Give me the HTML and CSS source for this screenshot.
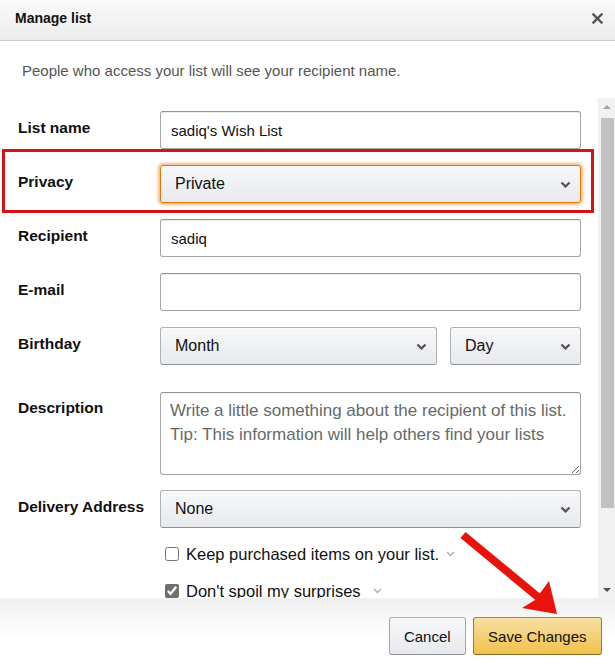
FILE: index.html
```html
<!DOCTYPE html>
<html lang="en">
<head>
    <meta charset="UTF-8">
    <meta name="viewport" content="width=device-width, initial-scale=1.0">
    <title>Manage list</title>
    <link rel="stylesheet" href="styles.css">
</head>
<body>
    <div class="popover">
        <div class="popover-header">
            <h4 class="popover-title">Manage list</h4>
            <button type="button" class="close-btn" aria-label="Close">
                <svg width="11" height="11" viewBox="0 0 11 11"><path d="M1.5 1.5l8 8M9.5 1.5l-8 8" stroke="#555" stroke-width="2.4" stroke-linecap="square"/></svg>
            </button>
        </div>

        <div class="popover-inner">
            <p class="intro">People who access your list will see your recipient name.</p>

            <div class="scroll-area">
                <form class="list-form" id="manageListForm">
                    <div class="form-row">
                        <label for="listName">List name</label>
                        <div class="field">
                            <input type="text" id="listName" class="text-input" value="sadiq's Wish List">
                        </div>
                    </div>
                    <div class="form-row">
                        <label>Privacy</label>
                        <div class="field">
                            <div class="dropdown focused">
                                <span>Private</span>
                                <svg class="chevron" width="11" height="7" viewBox="0 0 11 7"><path d="M1.5 1.5l4 4 4-4" fill="none" stroke="#555" stroke-width="2.3"/></svg>
                            </div>
                        </div>
                    </div>
                    <div class="form-row">
                        <label for="recipient">Recipient</label>
                        <div class="field">
                            <input type="text" id="recipient" class="text-input" value="sadiq">
                        </div>
                    </div>
                    <div class="form-row">
                        <label for="email">E-mail</label>
                        <div class="field">
                            <input type="email" id="email" class="text-input">
                        </div>
                    </div>
                    <div class="form-row birthday-row">
                        <label>Birthday</label>
                        <div class="field split">
                            <div class="dropdown month">
                                <span>Month</span>
                                <svg class="chevron" width="11" height="7" viewBox="0 0 11 7"><path d="M1.5 1.5l4 4 4-4" fill="none" stroke="#555" stroke-width="2.3"/></svg>
                            </div>
                            <div class="dropdown day">
                                <span>Day</span>
                                <svg class="chevron" width="11" height="7" viewBox="0 0 11 7"><path d="M1.5 1.5l4 4 4-4" fill="none" stroke="#555" stroke-width="2.3"/></svg>
                            </div>
                        </div>
                    </div>
                    <div class="form-row description-row">
                        <label for="description">Description</label>
                        <div class="field">
                            <textarea id="description" class="text-area" placeholder="Write a little something about the recipient of this list.&#10;Tip: This information will help others find your lists"></textarea>
                        </div>
                    </div>
                    <div class="form-row">
                        <label>Delivery Address</label>
                        <div class="field">
                            <div class="dropdown">
                                <span>None</span>
                                <svg class="chevron" width="11" height="7" viewBox="0 0 11 7"><path d="M1.5 1.5l4 4 4-4" fill="none" stroke="#555" stroke-width="2.3"/></svg>
                            </div>
                        </div>
                    </div>
                    <div class="check-row">
                        <input type="checkbox" id="keepPurchased">
                        <label for="keepPurchased">Keep purchased items on your list.</label>
                        <svg class="mini-chevron" width="9" height="6" viewBox="0 0 9 6"><path d="M1 1l3.5 3.5L8 1" fill="none" stroke="#aaa" stroke-width="1.3"/></svg>
                    </div>
                    <div class="check-row">
                        <input type="checkbox" id="noSpoil" checked>
                        <label for="noSpoil">Don't spoil my surprises</label>
                        <svg class="mini-chevron spaced" width="9" height="6" viewBox="0 0 9 6"><path d="M1 1l3.5 3.5L8 1" fill="none" stroke="#aaa" stroke-width="1.3"/></svg>
                    </div>
                </form>

                <div class="scrollbar">
                    <div class="scroll-btn up"></div>
                    <div class="scroll-track"><div class="scroll-thumb"></div></div>
                    <div class="scroll-btn down"></div>
                </div>
            </div>
        </div>

        <div class="popover-footer">
            <button type="button" class="btn btn-cancel">Cancel</button>
            <button type="submit" class="btn btn-save" form="manageListForm">Save Changes</button>
        </div>

        <!-- screenshot annotations -->
        <svg class="annotations" width="615" height="667" viewBox="0 0 615 667">
            <rect x="3.5" y="150.5" width="589" height="61" fill="none" stroke="#d0141a" stroke-width="3"/>
            <path d="M463 535L538 597" stroke="#e8130d" stroke-width="8"/>
            <polygon points="549,581 557,614 522,608 535,600" fill="#e8130d"/>
        </svg>
    </div>
</body>
</html>
```

FILE: styles.css
```css
* {
    box-sizing: border-box;
}
body {
    margin: 0;
    padding: 0;
    background-color: #fff;
    font-family: "Liberation Sans", Arial, sans-serif;
    color: #111;
}
.popover {
    position: relative;
    width: 615px;
    height: 667px;
    display: flex;
    flex-direction: column;
    overflow: hidden;
}
.popover-header {
    height: 41px;
    flex: 0 0 41px;
    display: flex;
    align-items: center;
    justify-content: space-between;
    padding: 0 12px 4px 15px;
    background: linear-gradient(to bottom, #fafafa, #ececec);
    border-bottom: 1px solid #c9c9c9;
}
.popover-title {
    margin: 0;
    font-size: 14px;
    font-weight: 700;
    color: #111;
}
.close-btn {
    border: none;
    background: none;
    padding: 0;
    width: 11px;
    height: 11px;
    cursor: pointer;
}
.close-btn svg {
    display: block;
}
.popover-inner {
    flex: 1;
    display: flex;
    flex-direction: column;
    min-height: 0;
}
.intro {
    margin: 0 0 17px 0;
    padding: 20px 22px 0 22px;
    font-size: 15px;
    line-height: 20px;
    color: #555;
}
.scroll-area {
    flex: 1;
    display: flex;
    min-height: 0;
}
.list-form {
    flex: 1;
    overflow: hidden;
    padding: 13px 17px 0 18px;
}
.form-row {
    display: flex;
    align-items: flex-start;
    margin-bottom: 16px;
}
.form-row > label {
    flex: 0 0 142px;
    padding-top: 7px;
    font-size: 15.5px;
    line-height: 20px;
    font-weight: 700;
    color: #111;
}
.birthday-row {
    margin-bottom: 27px;
}
.description-row {
    margin-bottom: 15px;
}
.description-row > label {
    padding-top: 6px;
}
.field {
    flex: 1;
}
.field.split {
    display: flex;
    gap: 13px;
}
.text-input {
    display: block;
    width: 100%;
    height: 38px;
    padding: 0 10px;
    font-size: 15px;
    font-family: inherit;
    color: #111;
    border: 1px solid #a6a6a6;
    border-top-color: #949494;
    border-radius: 3px;
    box-shadow: 0 1px 0 rgba(0, 0, 0, .07) inset;
    outline: none;
}
.text-area {
    display: block;
    width: 100%;
    height: 83px;
    padding: 6px 9px;
    font-size: 17px;
    line-height: 24px;
    font-family: inherit;
    color: #111;
    border: 1px solid #a6a6a6;
    border-top-color: #949494;
    border-radius: 3px;
    box-shadow: 0 1px 0 rgba(0, 0, 0, .07) inset;
    outline: none;
}
.text-area::placeholder {
    color: #666a6a;
}
.dropdown {
    height: 38px;
    display: flex;
    align-items: center;
    justify-content: space-between;
    padding: 0 9px 0 14px;
    font-size: 16px;
    color: #111;
    background: linear-gradient(to bottom, #f7f8fa, #e7e9ec);
    border: 1px solid #adb1b8;
    border-bottom-color: #8d9096;
    border-radius: 3px;
    box-shadow: 0 1px 0 rgba(255, 255, 255, .6) inset;
}
.dropdown.focused {
    border-color: #e77600;
    box-shadow: 0 0 3px 2px rgba(228, 121, 17, .5);
}
.dropdown.month {
    flex: 0 0 277px;
}
.dropdown.day {
    flex: 1;
}
.check-row {
    display: flex;
    align-items: center;
    height: 20px;
    margin: 0 0 17px 147px;
    font-size: 16.5px;
    color: #111;
}
.check-row input {
    width: 14px;
    height: 14px;
    margin: 0 7px 0 0;
    accent-color: #707070;
}
.mini-chevron {
    margin-left: 7px;
}
.mini-chevron.spaced {
    margin-left: 12px;
}
.scrollbar {
    flex: 0 0 17px;
    display: flex;
    flex-direction: column;
    background-color: #f1f1f1;
}
.scroll-btn {
    height: 17px;
    flex: 0 0 17px;
    display: flex;
    align-items: center;
    justify-content: center;
}
.scroll-btn.up::before {
    content: "";
    border-left: 4px solid transparent;
    border-right: 4px solid transparent;
    border-bottom: 4px solid #a3a3a3;
}
.scroll-btn.down::before {
    content: "";
    border-left: 4px solid transparent;
    border-right: 4px solid transparent;
    border-top: 4px solid #505050;
}
.scroll-track {
    flex: 1;
    padding: 3px 1px 0 3px;
}
.scroll-thumb {
    height: 390px;
    background-color: #c1c1c1;
}
.popover-footer {
    height: 69px;
    flex: 0 0 69px;
    display: flex;
    justify-content: flex-end;
    align-items: flex-start;
    gap: 7px;
    padding: 19px 13px 0 0;
    background: linear-gradient(to bottom, #f0f0f0, #fff 60%);
}
.btn {
    height: 38px;
    padding: 0 14px;
    font-size: 15px;
    font-family: inherit;
    color: #111;
    border: 1px solid;
    border-radius: 3px;
    cursor: pointer;
}
.btn-cancel {
    background: linear-gradient(to bottom, #f7f8fa, #e7e9ec);
    border-color: #adb1b8 #a2a6ac #8d9096;
}
.btn-save {
    padding: 0 14.5px;
    background: linear-gradient(to bottom, #f7dfa5, #f0c14b);
    border-color: #a88734 #9c7e31 #846a29;
}
.annotations {
    position: absolute;
    top: 0;
    left: 0;
    pointer-events: none;
}
```
